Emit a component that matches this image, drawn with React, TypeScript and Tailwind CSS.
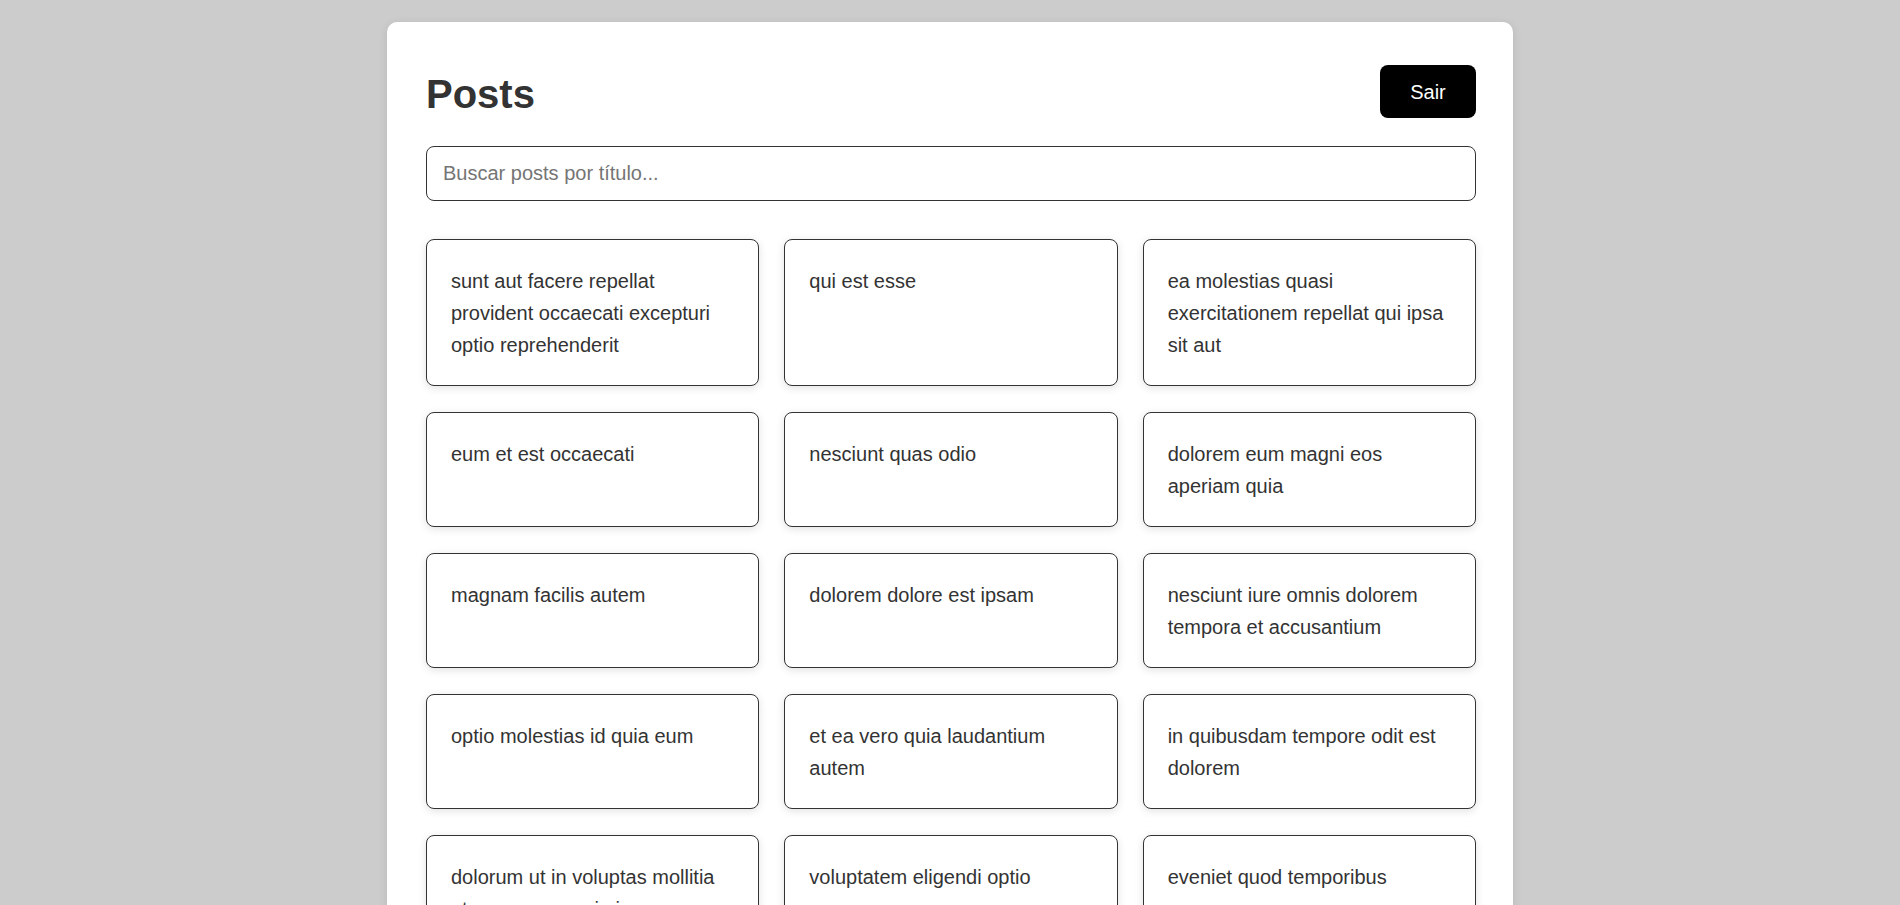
import React from "react";

const posts = [
  "sunt aut facere repellat provident occaecati excepturi optio reprehenderit",
  "qui est esse",
  "ea molestias quasi exercitationem repellat qui ipsa sit aut",
  "eum et est occaecati",
  "nesciunt quas odio",
  "dolorem eum magni eos aperiam quia",
  "magnam facilis autem",
  "dolorem dolore est ipsam",
  "nesciunt iure omnis dolorem tempora et accusantium",
  "optio molestias id quia eum",
  "et ea vero quia laudantium autem",
  "in quibusdam tempore odit est dolorem",
  "dolorum ut in voluptas mollitia et saepe quo animi",
  "voluptatem eligendi optio",
  "eveniet quod temporibus",
  "sint suscipit perspiciatis velit dolorum rerum ipsa laboriosam odio",
  "fugit voluptas sed molestias voluptatem provident",
  "voluptate et itaque vero tempora molestiae",
  "adipisci placeat illum aut reiciendis qui",
  "doloribus ad provident suscipit at",
];

export default function App() {
  return (
    <div className="min-h-screen bg-[#cccccc] pt-[22px] pb-[40px] font-['Liberation_Sans',Arial,sans-serif]">
      <div className="mx-auto w-[1126px] rounded-[10px] bg-white pl-[39px] pr-[37px] pt-[38px] pb-[40px] shadow-[0_2px_10px_rgba(0,0,0,0.1)]">
        <div className="flex h-[63px] items-center justify-between">
          <h1 className="pt-[4px] text-[40px] font-bold leading-[46px] text-[#333333]">Posts</h1>
          <button className="h-[53px] w-[96px] rounded-lg bg-black text-[20px] text-white">Sair</button>
        </div>
        <input
          className="mt-[23px] block h-[55px] w-full rounded-lg border border-[#333333] px-[16px] text-[20px] text-[#333333] placeholder:text-[#757575] outline-none"
          placeholder="Buscar posts por título..."
        />
        <div className="mt-[38px] grid grid-cols-3 gap-x-[25px] gap-y-[26px]">
          {posts.map((t, i) => (
            <div
              key={i}
              className="rounded-lg border border-[#333333] bg-white px-[24px] py-[24.5px] text-[20px] leading-[32px] text-[#333333] shadow-[0_2px_8px_rgba(0,0,0,0.12)]"
            >
              {t}
            </div>
          ))}
        </div>
      </div>
    </div>
  );
}
